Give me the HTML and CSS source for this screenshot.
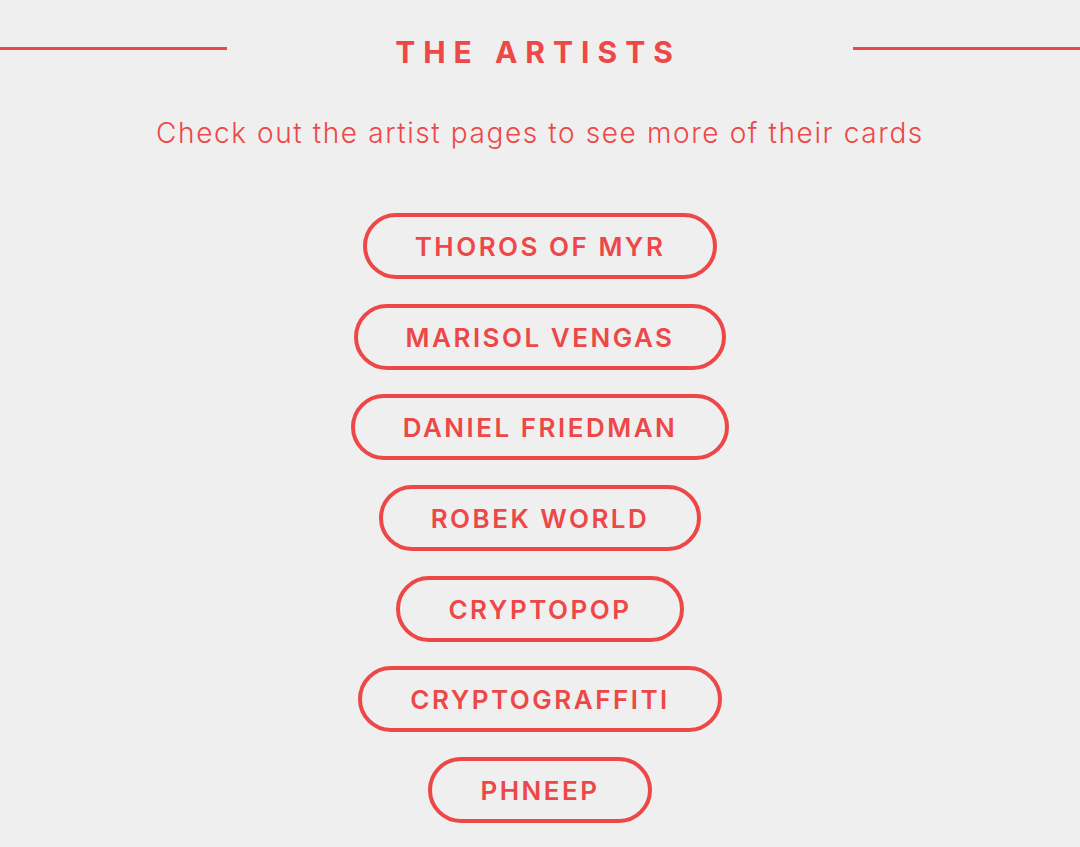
FILE: index.html
```html
<!DOCTYPE html>
<html>

<head>
    <title>The Artists</title>
    <meta charset="UTF-8">
    <meta name="viewport" content="width=device-width, initial-scale=1.0">
    <link rel="stylesheet" href="styles.css">
</head>

<body>
    <section class="artists">
        <div class="heading">
            <span class="rule"></span>
            <h2>The Artists</h2>
            <span class="rule"></span>
        </div>

        <p class="intro">Check out the artist pages to see more of their cards</p>

        <div class="list">
            <a class="artist-btn" href="#">Thoros of Myr</a>
            <a class="artist-btn" href="#">Marisol Vengas</a>
            <a class="artist-btn" href="#">Daniel Friedman</a>
            <a class="artist-btn" href="#">Robek World</a>
            <a class="artist-btn" href="#">Cryptopop</a>
            <a class="artist-btn" href="#">Cryptograffiti</a>
            <a class="artist-btn" href="#">Phneep</a>
        </div>
    </section>
</body>

</html>
```

FILE: styles.css
```css
body {
    margin: 0;
    font-family: Inter, "Noto Sans", sans-serif;
    background-color: #efefef;
    color: #ee4747;
}

.artists {
    padding-top: 30px;
}

.heading {
    display: flex;
    align-items: center;
}

.rule {
    flex: 1;
    height: 3px;
    margin-top: -7px;
    background-color: #ee4747;
}

.heading h2 {
    margin: 0 172px 0 168px;
    font-size: 30px;
    font-weight: 700;
    text-transform: uppercase;
    letter-spacing: 8px;
    line-height: 44px;
}

.intro {
    margin: 42px 0 0;
    text-align: center;
    font-size: 28px;
    font-weight: 300;
    letter-spacing: 1.6px;
}

.list {
    display: flex;
    flex-direction: column;
    align-items: center;
    gap: 24.7px;
    margin-top: 63px;
}

.artist-btn {
    display: block;
    padding: 0 48px;
    height: 58px;
    line-height: 60px;
    border: 4px solid #ee4747;
    border-radius: 40px;
    color: #ee4747;
    text-decoration: none;
    text-transform: uppercase;
    font-size: 26px;
    font-weight: 600;
    letter-spacing: 2.5px;
}
```
